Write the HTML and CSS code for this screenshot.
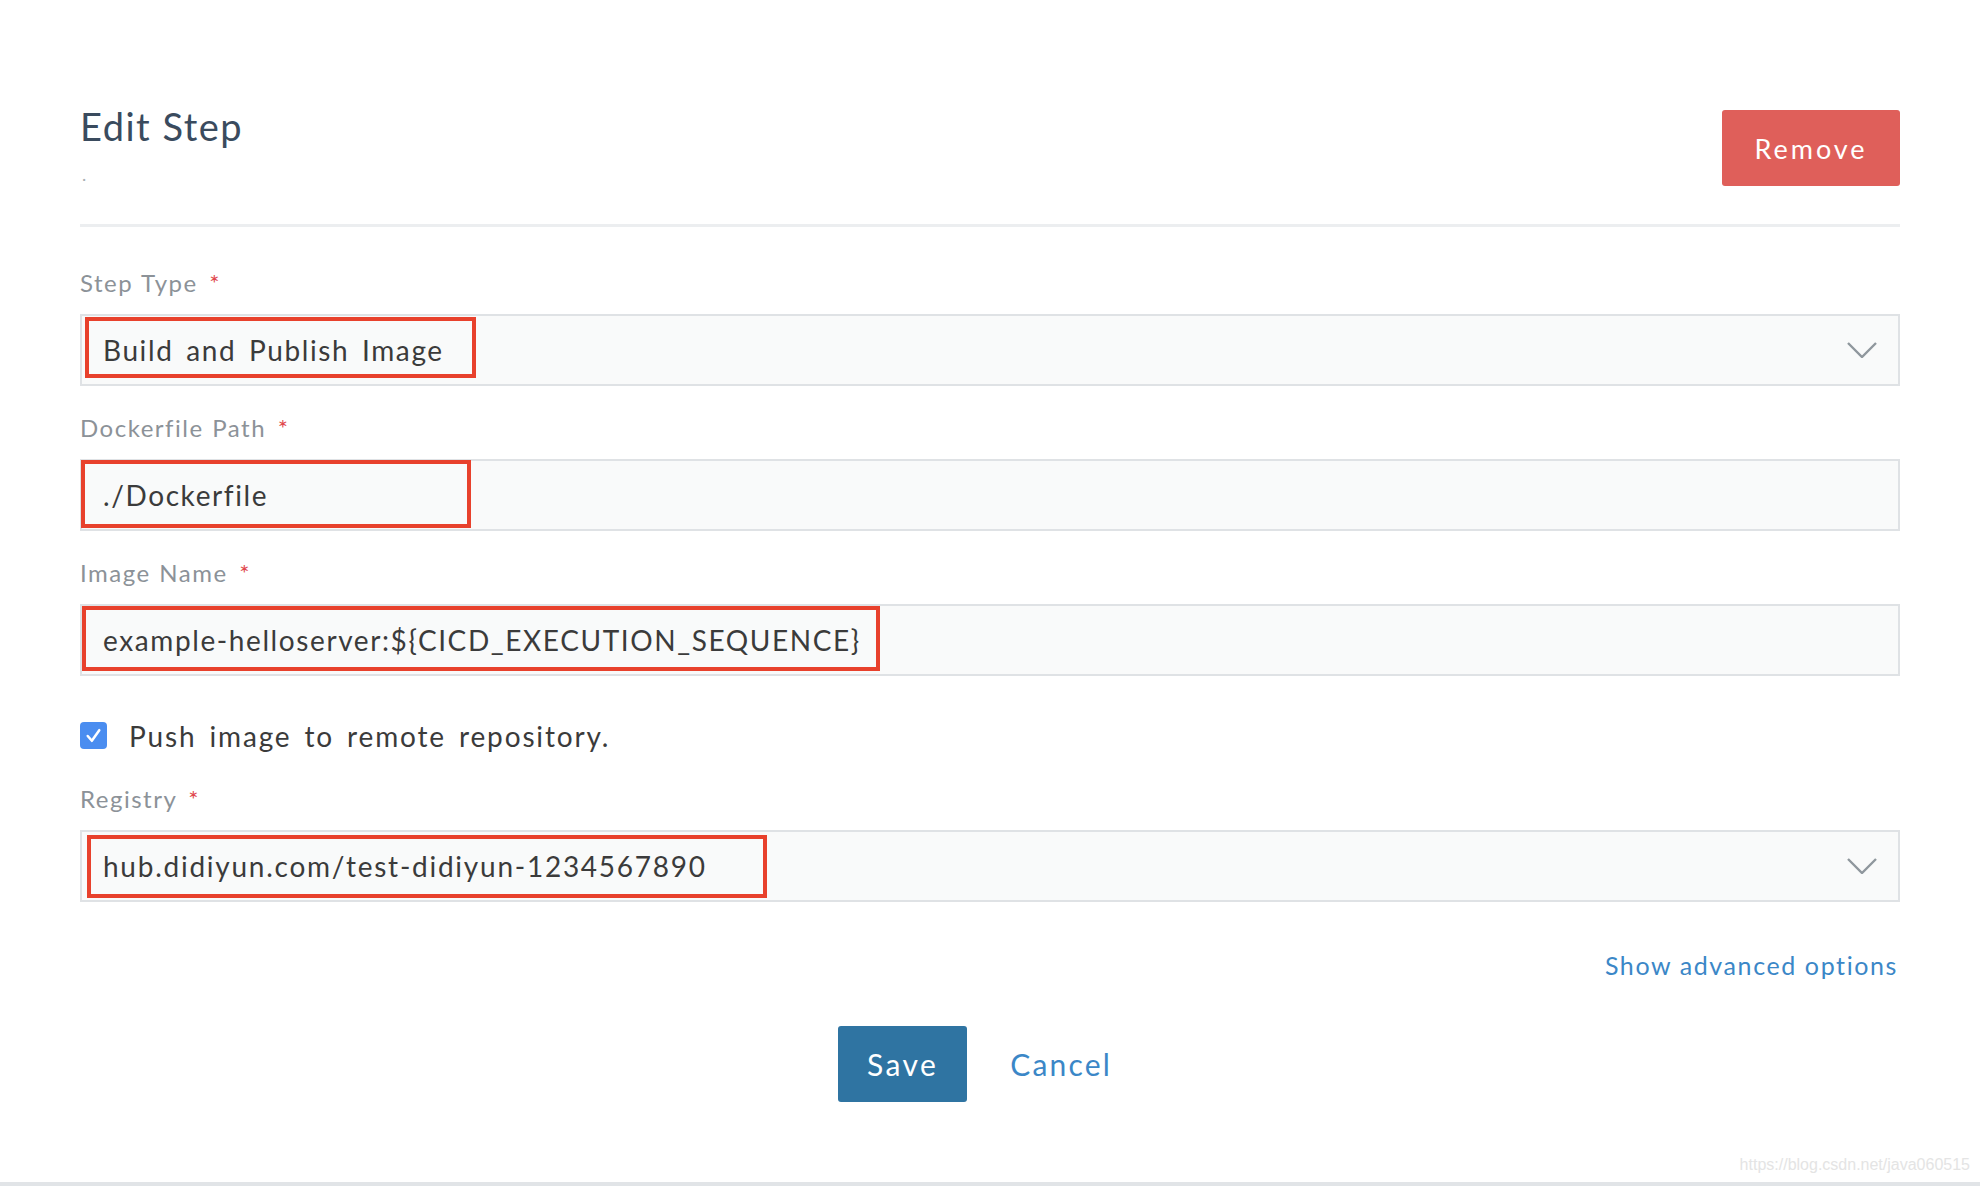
FILE: index.html
```html
<!DOCTYPE html>
<html lang="en">
<head>
<meta charset="utf-8">
<title>Edit Step</title>
<link rel="stylesheet" href="styles.css">
</head>
<body>
<div class="app">
  <main class="page">
    <header class="head">
      <div class="head-text">
        <h1 class="title">Edit Step</h1>
        <div class="subtitle">.</div>
      </div>
      <button class="btn btn-remove" type="button">Remove</button>
    </header>
    <hr class="divider">

    <form class="form">
      <div class="field">
        <div class="label">Step Type <span class="req">*</span></div>
        <div class="control">
          <span class="value">Build and Publish Image</span>
          <svg class="chevron" viewBox="0 0 30 16" aria-hidden="true"><path d="M1 1 L15 15 L29 1" fill="none" stroke="#8f979d" stroke-width="2.4"/></svg>
          <span class="mark mark-type"></span>
        </div>
      </div>

      <div class="field">
        <div class="label">Dockerfile Path <span class="req">*</span></div>
        <div class="control">
          <span class="value">./Dockerfile</span>
          <span class="mark mark-docker"></span>
        </div>
      </div>

      <div class="field">
        <div class="label">Image Name <span class="req">*</span></div>
        <div class="control">
          <span class="value">example-helloserver:${CICD_EXECUTION_SEQUENCE}</span>
          <span class="mark mark-image"></span>
        </div>
      </div>

      <label class="check-row">
        <span class="checkbox"><svg viewBox="0 0 28 28" aria-hidden="true"><path d="M8 14.5 L12.3 19.5 L20 8.5" fill="none" stroke="#fff" stroke-width="2.6" stroke-linecap="round" stroke-linejoin="round"/></svg></span>
        <span class="check-text">Push image to remote repository.</span>
      </label>

      <div class="field field-registry">
        <div class="label">Registry <span class="req">*</span></div>
        <div class="control">
          <span class="value value-registry">hub.didiyun.com/test-didiyun-1234567890</span>
          <svg class="chevron" viewBox="0 0 30 16" aria-hidden="true"><path d="M1 1 L15 15 L29 1" fill="none" stroke="#8f979d" stroke-width="2.4"/></svg>
          <span class="mark mark-registry"></span>
        </div>
      </div>
    </form>

    <div class="advanced"><a class="link" href="#">Show advanced options</a></div>

    <div class="actions">
      <button class="btn btn-save" type="button">Save</button>
      <button class="btn btn-cancel" type="button">Cancel</button>
    </div>
  </main>
  <footer class="footer">
    <span class="watermark">https://blog.csdn.net/java060515</span>
  </footer>
</div>
</body>
</html>
```
FILE: styles.css
```css
* { box-sizing: border-box; }
html, body { margin: 0; padding: 0; background: #fff; }
body {
  font-family: Lato, "Open Sans", sans-serif;
  color: #3b3b3b;
  overflow: hidden;
}
.app {
  height: 100vh;
  display: flex;
  flex-direction: column;
}
.page {
  flex: 1;
  padding: 103px 80px 0 80px;
}
.head {
  display: flex;
  justify-content: space-between;
  align-items: flex-start;
}
.title {
  margin: 0;
  font-size: 38px;
  line-height: 46px;
  font-weight: 400;
  color: #3a4b5e;
  letter-spacing: 1.5px;
}
.subtitle {
  margin-top: 14px;
  font-size: 18px;
  line-height: 22px;
  color: #a8adb2;
  padding-left: 2px;
}
.btn {
  font-family: inherit;
  border: 0;
  cursor: pointer;
}
.btn-remove {
  margin-top: 7px;
  width: 178px;
  height: 76px;
  background: #df5f5a;
  color: #fff;
  font-size: 27px;
  border-radius: 3px;
  letter-spacing: 3px;
  padding: 0;
}
.divider {
  margin: 38px 0 0 0;
  border: 0;
  height: 3px;
  background: #eceef0;
}
.form {
  margin-top: 41px;
  display: flex;
  flex-direction: column;
}
.field {
  display: flex;
  flex-direction: column;
  gap: 17px;
  margin-bottom: 27px;
}
.label {
  font-size: 24px;
  line-height: 29px;
  color: #8c9298;
  letter-spacing: 1.5px;
  word-spacing: 1px;
}
.req { color: #e0474c; margin-left: 3px; }
.control {
  position: relative;
  height: 72px;
  border: 2px solid #dfe2e5;
  background: #f9fafa;
  display: flex;
  align-items: center;
  justify-content: space-between;
  padding: 0 21px 0 21px;
}
.value {
  font-size: 28px;
  color: #3b3b3b;
  letter-spacing: 1.6px;
  word-spacing: 4px;
}
.value-registry { letter-spacing: 1.75px; }
.chevron {
  width: 30px;
  height: 16px;
}
.mark {
  position: absolute;
  border: 4px solid #e8412c;
  pointer-events: none;
}
.mark-type { left: 3px; top: 1px; width: 391px; height: 61px; }
.mark-docker { left: -1px; top: -1px; width: 390px; height: 68px; }
.mark-image { left: 0px; top: 0px; width: 798px; height: 65px; }
.mark-registry { left: 5px; top: 3px; width: 680px; height: 63px; }

.check-row {
  display: flex;
  align-items: center;
  gap: 22px;
  margin-top: 19px;
  height: 27px;
}
.checkbox {
  width: 27px;
  height: 27px;
  border-radius: 4px;
  background: #4a8df0;
  display: flex;
  align-items: center;
  justify-content: center;
}
.checkbox svg { width: 27px; height: 27px; }
.check-text {
  font-size: 28px;
  color: #3b3b3b;
  letter-spacing: 1.85px;
  word-spacing: 4px;
}
.field-registry { margin-top: 35px; margin-bottom: 0; }

.advanced {
  margin-top: 48px;
  display: flex;
  justify-content: flex-end;
  padding-right: 2px;
}
.link {
  font-size: 25px;
  line-height: 30px;
  color: #3b87c7;
  text-decoration: none;
  letter-spacing: 1.6px;
}
.actions {
  margin-top: 46px;
  display: flex;
  justify-content: center;
  gap: 13px;
}
.btn-save {
  height: 76px;
  padding: 0 29px;
  background: #2f74a2;
  color: #fff;
  font-size: 30px;
  border-radius: 3px;
  letter-spacing: 2.4px;
}
.btn-cancel {
  height: 76px;
  padding: 0 30px;
  background: transparent;
  color: #3b87c7;
  font-size: 30px;
  letter-spacing: 2.2px;
}
.footer {
  height: 30px;
  border-bottom: 4px solid #e1e4e7;
  display: flex;
  justify-content: flex-end;
  align-items: flex-start;
  padding-right: 10px;
}
.watermark {
  font-family: "Liberation Sans", Arial, sans-serif;
  font-size: 16px;
  line-height: 18px;
  color: #e4e4e4;
}
```
